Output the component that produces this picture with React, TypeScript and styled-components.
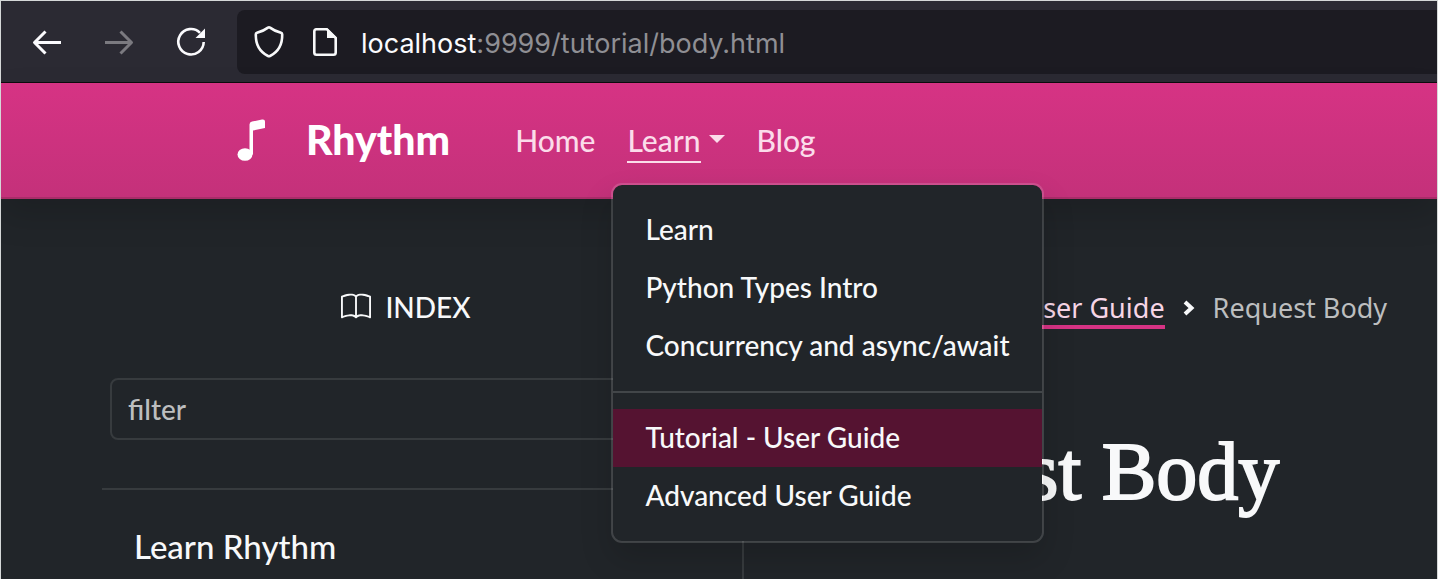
import React from 'react';
import styled, { createGlobalStyle, css } from 'styled-components';
import { BsBook } from 'react-icons/bs';

const GlobalStyle = createGlobalStyle`
  *, *::before, *::after { box-sizing: border-box; }
  body {
    margin: 0;
    background: #212529;
    color: #f8f9fa;
    font-family: Lato, "Open Sans", sans-serif;
    font-size: 28px;
    font-weight: 500;
    line-height: 42px;
  }
  a { color: inherit; text-decoration: none; }
  button { border: 0; padding: 0; background: none; color: inherit; font: inherit; cursor: pointer; }
  h1, ul, ol { margin: 0; padding: 0; }
  ul, ol { list-style: none; }
`;

const Frame = styled.div`
  display: flex;
  flex-direction: column;
  min-height: 100vh;
  border: 1px solid #d5d8d8;
  overflow: hidden;
`;

const BrowserBar = styled.div`
  display: flex;
  align-items: center;
  padding: 9px 0 8px 28px;
  background: #2b2a33;
  border-bottom: 1px solid #0c0c0d;
`;

const BrowserActions = styled.div`
  display: flex;
  gap: 36px;
  margin-right: 28px;
`;

const BrowserButton = styled.button`
  display: flex;
  width: 36px;
  height: 36px;
  color: #fbfbfe;
  &:disabled { color: #7b7a80; }
`;

const AddressBar = styled.div`
  display: flex;
  flex: 1;
  align-items: center;
  height: 64px;
  padding-left: 14px;
  background: #1c1b22;
  border-radius: 8px 0 0 8px;
`;

const SiteIcons = styled.div`
  display: flex;
  gap: 20px;
  margin-right: 18px;
`;

const Address = styled.span`
  padding-top: 3px;
  color: #8f8f94;
  font-family: Inter, "Liberation Sans", sans-serif;
  font-size: 27px;
  font-weight: 400;
  white-space: nowrap;
`;

const Host = styled.span`
  color: #fbfbfe;
`;

const Navbar = styled.nav`
  position: relative;
  z-index: 2;
  display: flex;
  align-items: center;
  height: 116px;
  padding-left: 236px;
  background: linear-gradient(#d63384, #c4317a);
  border-bottom: 2px solid #a92d69;
  box-shadow: 0 16px 32px rgba(0, 0, 0, 0.15);
`;

const Brand = styled.a`
  display: flex;
  align-items: center;
  gap: 41px;
  margin-right: 49px;
  color: #fff;
  font-size: 41px;
  font-weight: 900;
`;

const NavList = styled.ul`
  display: flex;
`;

const NavItem = styled.li`
  position: relative;
  padding: 16px;
  color: #fbdcea;
`;

const navLabel = css`
  display: block;
  height: 42px;
  font-size: 30px;
`;

const NavLink = styled.a`
  ${navLabel}
`;

const NavToggle = styled.button`
  ${navLabel}
  display: flex;
  gap: 8px;
`;

const ActiveLabel = styled.span`
  height: 44px;
  border-bottom: 2px solid #fbdcea;
`;

const Caret = styled.span`
  margin-top: 16px;
  height: 8px;
  border: 8px solid transparent;
  border-top-color: currentColor;
  border-bottom: 0;
`;

const Menu = styled.ul`
  position: absolute;
  top: 100%;
  left: 0;
  margin-top: 6px;
  min-width: 432px;
  padding: 16px 0;
  color: #f8f9fa;
  background: #212529;
  background-clip: padding-box;
  border: 2px solid rgba(255, 255, 255, 0.15);
  border-radius: 11px;
  box-shadow: 0 16px 32px rgba(0, 0, 0, 0.15);
`;

const MenuLink = styled.a<{ $active?: boolean }>`
  display: block;
  padding: 7px 32px 9px;
  white-space: nowrap;
  background: ${(p) => (p.$active ? '#551331' : 'transparent')};
`;

const MenuDivider = styled.li`
  margin: 16px 0;
  border-top: 2px solid #424649;
`;

const Page = styled.div`
  display: flex;
  flex: 1;
`;

const Sidebar = styled.aside`
  flex: none;
  width: 743px;
  padding: 87px 32px 0 101px;
  border-right: 2px solid #373b3e;
`;

const SidebarTitle = styled.div`
  display: flex;
  align-items: center;
  justify-content: center;
  gap: 14px;
`;

const Filter = styled.input`
  display: block;
  width: calc(100% - 16px);
  height: 62px;
  margin: 50px 8px 48px;
  padding: 0 16px;
  color: inherit;
  font: inherit;
  background: transparent;
  border: 2px solid #373b3e;
  border-radius: 8px;
  &::placeholder { color: #bcbebf; opacity: 1; }
`;

const SidebarNav = styled.nav`
  padding: 32px;
  border-top: 2px solid #373b3e;
  font-size: 33px;
  line-height: 48px;
`;

const Main = styled.main`
  flex: 1;
  min-width: 0;
  padding: 88px 0 0 73px;
`;

const Breadcrumb = styled.ol`
  display: flex;
  align-items: center;
  gap: 18px;
  padding-left: 87px;
  font-family: "Noto Sans", "Open Sans", sans-serif;
  font-size: 27px;
  font-weight: 400;
  white-space: nowrap;
`;

const Crumb = styled.li`
  display: flex;
  align-items: center;
  gap: 18px;
  color: #bcbebf;
`;

const CrumbLink = styled.a`
  height: 42px;
  color: #f7d6e6;
  border-bottom: 4px solid #d63384;
`;

const Title = styled.h1`
  margin-top: 95px;
  font-family: "Liberation Serif", serif;
  font-size: 82px;
  font-weight: 400;
  line-height: 96px;
  white-space: nowrap;
  -webkit-text-stroke: 2px currentColor;
`;

const Icon = ({ size = 36, children }: { size?: number; children: React.ReactNode }) => (
  <svg width={size} height={size} viewBox={`0 0 ${size} ${size}`} fill="none" stroke="currentColor" strokeWidth="2.6" strokeLinejoin="round" aria-hidden="true">
    {children}
  </svg>
);

const NoteIcon = () => (
  <svg width="28" height="42" viewBox="0 0 28 42" fill="currentColor" aria-hidden="true">
    <ellipse cx="8" cy="35.5" rx="7.5" ry="6.3" />
    <path d="M12.500 35.500V5.500Q12.500 3.200 15 2.600L25 .6Q28 .1 28 2.400V9L16 11.500V35.500Z" />
  </svg>
);

const menu = [
  ['Learn', 'Python Types Intro', 'Concurrency and async/await'],
  ['Tutorial - User Guide', 'Advanced User Guide'],
];

export default function App() {
  return (
    <Frame>
      <GlobalStyle />
      <BrowserBar>
        <BrowserActions>
          <BrowserButton aria-label="Back">
            <Icon><path d="M32 18.500H5M16.500 7.500L5.500 18.500L16.500 29.500" strokeWidth="3" /></Icon>
          </BrowserButton>
          <BrowserButton aria-label="Forward" disabled>
            <Icon><path d="M4 18.500H31M19.500 7.500L30.500 18.500L19.500 29.500" strokeWidth="3" /></Icon>
          </BrowserButton>
          <BrowserButton aria-label="Reload">
            <Icon>
              <path d="M30.700 18A12.700 12.700 0 1 1 27 8.800" />
              <path d="M32 4.500V14H22.500Z" fill="currentColor" stroke="none" />
            </Icon>
          </BrowserButton>
        </BrowserActions>
        <AddressBar>
          <SiteIcons>
            <Icon>
              <path d="M17 3.600Q18 3 19 3.600Q23.500 7 30 8.800Q31.200 9.200 31.200 10.500C31.400 20 27 28 19 32Q18 32.600 17 32C9 28 4.600 20 4.800 10.500Q4.800 9.200 6 8.800Q12.500 7 17 3.600Z" />
            </Icon>
            <Icon>
              <path d="M9 5.300H20L28.700 14V28.500Q28.700 30.700 26.500 30.700H9.500Q7.300 30.700 7.300 28.500V7.500Q7.300 5.300 9.500 5.300Z" />
              <path d="M20 4V14H30Z" fill="currentColor" stroke="none" />
            </Icon>
          </SiteIcons>
          <Address><Host>localhost</Host>:9999/tutorial/body.html</Address>
        </AddressBar>
      </BrowserBar>
      <Navbar>
        <Brand href="#"><NoteIcon />Rhythm</Brand>
        <NavList>
          <NavItem><NavLink href="#">Home</NavLink></NavItem>
          <NavItem>
            <NavToggle aria-expanded="true"><ActiveLabel>Learn</ActiveLabel><Caret /></NavToggle>
            <Menu>
              {menu.map((group, i) => (
                <React.Fragment key={i}>
                  {i > 0 && <MenuDivider role="separator" />}
                  {group.map((label) => (
                    <li key={label}><MenuLink href="#" $active={label.startsWith('Tutorial')}>{label}</MenuLink></li>
                  ))}
                </React.Fragment>
              ))}
            </Menu>
          </NavItem>
          <NavItem><NavLink href="#">Blog</NavLink></NavItem>
        </NavList>
      </Navbar>
      <Page>
        <Sidebar>
          <SidebarTitle><BsBook size={30} />INDEX</SidebarTitle>
          <Filter type="text" placeholder="filter" aria-label="filter" />
          <SidebarNav><a href="#">Learn Rhythm</a></SidebarNav>
        </Sidebar>
        <Main>
          <Breadcrumb>
            <Crumb>
              <CrumbLink href="#">Tutorial - User Guide</CrumbLink>
              <svg width="12" height="16" viewBox="0 0 12 16" fill="none" stroke="#f8f9fa" strokeWidth="4" aria-hidden="true"><path d="M2 2L8.500 8L2 14" /></svg>
            </Crumb>
            <Crumb>Request Body</Crumb>
          </Breadcrumb>
          <Title>Request Body</Title>
        </Main>
      </Page>
    </Frame>
  );
}
